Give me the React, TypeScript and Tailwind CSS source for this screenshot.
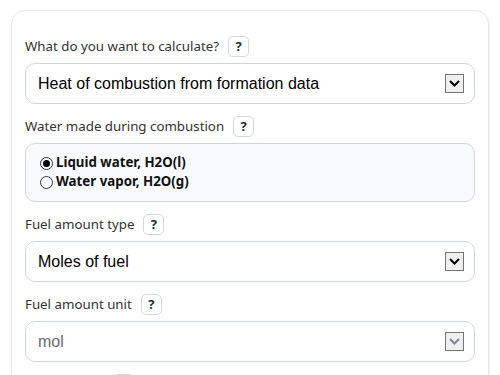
import React from 'react';

const HelpBadge: React.FC = () => (
  <span className="inline-flex items-center justify-center w-[21px] h-[21px] rounded-[5px] border border-[#d4d8de] bg-white text-[13px] font-bold text-[#1e293b] font-['Noto_Sans',sans-serif]">
    ?
  </span>
);

const Chevron: React.FC<{ muted?: boolean }> = ({ muted }) => (
  <span className="flex items-center justify-center w-[19px] h-[19px] border border-[#767676] bg-[#efefef]">
    <svg width="11" height="7" viewBox="0 0 11 7">
      <path d="M1 1 L5.5 5.5 L10 1" fill="none" stroke={muted ? '#7b8aa0' : '#000'} strokeWidth="2" />
    </svg>
  </span>
);

const FieldLabel: React.FC<{ text: string }> = ({ text }) => (
  <div className="flex items-center gap-[9px] h-[21px] mb-1.5">
    <span className="text-[13.3px] text-[#333] font-['Noto_Sans',sans-serif]">{text}</span>
    <HelpBadge />
  </div>
);

const SelectBox: React.FC<{ value: string; disabled?: boolean }> = ({ value, disabled }) => (
  <div className="flex items-center justify-between h-[41px] pl-3 pr-[10px] rounded-[10px] border border-[#cfd6df] bg-white">
    <span className={`text-[16px] font-['Liberation_Sans',Arial,sans-serif] ${disabled ? 'text-[#6b6b6b]' : 'text-black'}`}>
      {value}
    </span>
    <Chevron muted={disabled} />
  </div>
);

const Radio: React.FC<{ label: string; checked?: boolean }> = ({ label, checked }) => (
  <label className="flex items-center gap-[3px] h-[19px]">
    <span className="flex items-center justify-center w-[13px] h-[13px] rounded-full border border-[#333] bg-white">
      {checked && <span className="w-[7px] h-[7px] rounded-full bg-black" />}
    </span>
    <span className="text-[13.3px] font-bold text-[#111] font-['Noto_Sans',sans-serif]">{label}</span>
  </label>
);

export default function App() {
  return (
    <div className="w-[500px] h-[375px] overflow-hidden bg-white pt-[10px] px-[11px]">
      <div className="rounded-[14px] border border-[#e5e7eb] shadow-[1px_0_2px_rgba(0,0,0,0.05)] px-[13px] pt-[25px] pb-6 flex flex-col gap-3">
        <div>
          <FieldLabel text="What do you want to calculate?" />
          <SelectBox value="Heat of combustion from formation data" />
        </div>
        <div>
          <FieldLabel text="Water made during combustion" />
          <div className="h-[59px] rounded-[10px] border border-[#cfd6df] bg-[#f8fafc] pl-[14px] flex flex-col justify-center">
            <Radio label="Liquid water, H2O(l)" checked />
            <Radio label="Water vapor, H2O(g)" />
          </div>
        </div>
        <div>
          <FieldLabel text="Fuel amount type" />
          <SelectBox value="Moles of fuel" />
        </div>
        <div>
          <FieldLabel text="Fuel amount unit" />
          <SelectBox value="mol" disabled />
        </div>
        <div>
          <FieldLabel text="Fuel amount" />
        </div>
      </div>
    </div>
  );
}
